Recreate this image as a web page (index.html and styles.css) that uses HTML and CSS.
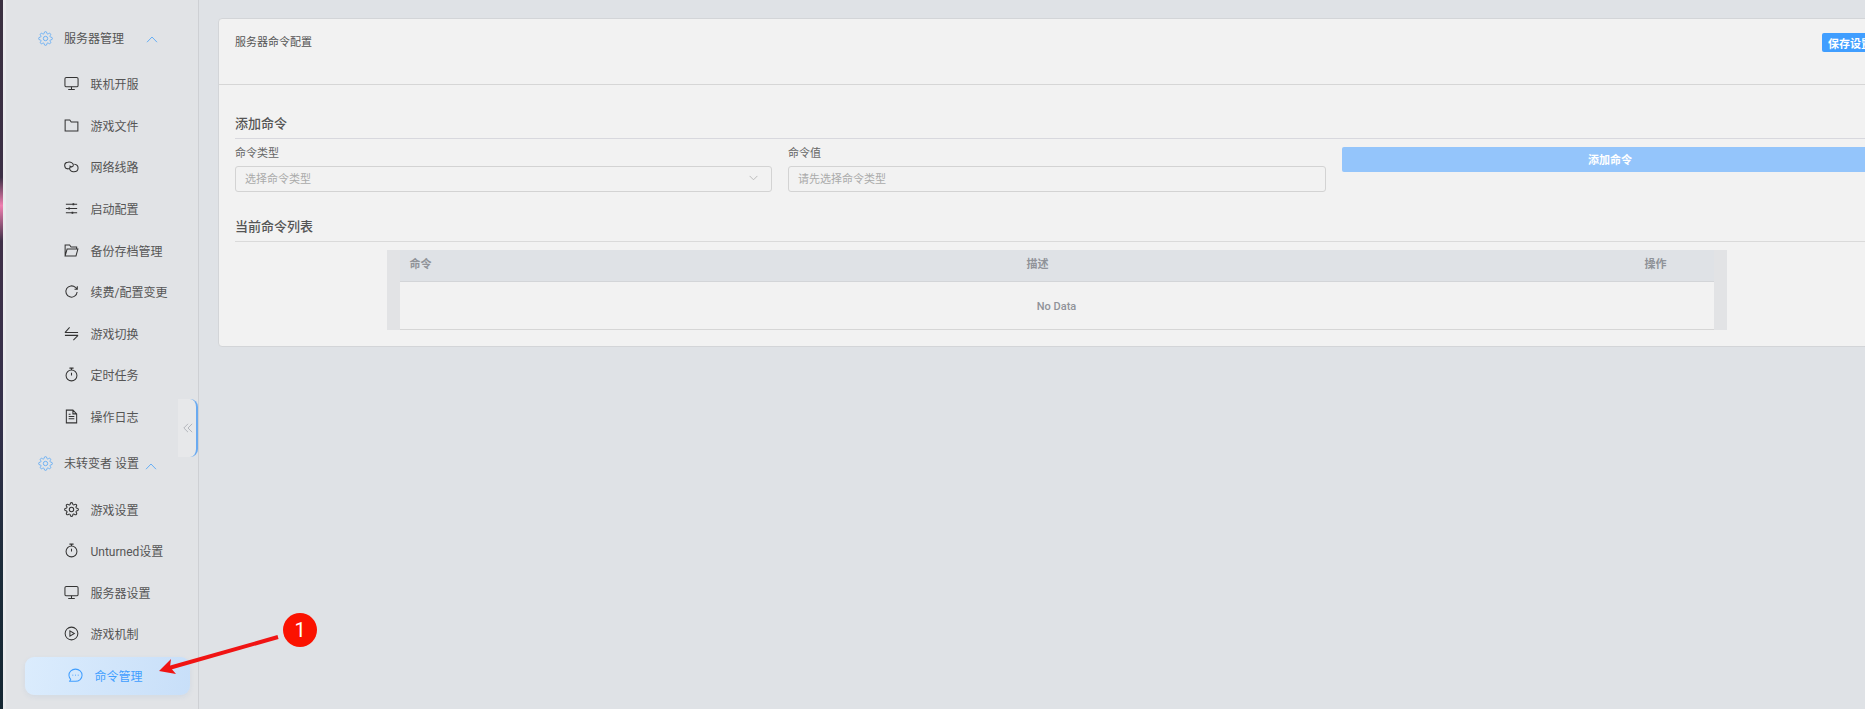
FILE: index.html
```html
<!DOCTYPE html>
<html lang="zh-CN">
<head>
    <meta charset="UTF-8">
    <title>服务器命令配置</title>
    <link rel="stylesheet" href="styles.css">
</head>
<body>
    <svg class="defs" width="0" height="0">
        <symbol id="gear" viewBox="0 0 24 24">
            <circle cx="12" cy="12" r="3.5"/>
            <path d="M19.4 15a1.65 1.65 0 0 0 .33 1.82l.06.06a2 2 0 0 1 0 2.83 2 2 0 0 1-2.83 0l-.06-.06a1.65 1.65 0 0 0-1.82-.33 1.65 1.65 0 0 0-1 1.51V21a2 2 0 0 1-2 2 2 2 0 0 1-2-2v-.09A1.65 1.65 0 0 0 9 19.4a1.65 1.65 0 0 0-1.82.33l-.06.06a2 2 0 0 1-2.83 0 2 2 0 0 1 0-2.83l.06-.06a1.65 1.65 0 0 0 .33-1.82 1.65 1.65 0 0 0-1.51-1H3a2 2 0 0 1-2-2 2 2 0 0 1 2-2h.09A1.65 1.65 0 0 0 4.6 9a1.65 1.65 0 0 0-.33-1.82l-.06-.06a2 2 0 0 1 0-2.83 2 2 0 0 1 2.83 0l.06.06a1.65 1.65 0 0 0 1.82.33H9a1.65 1.65 0 0 0 1-1.51V3a2 2 0 0 1 2-2 2 2 0 0 1 2 2v.09a1.65 1.65 0 0 0 1 1.51 1.65 1.65 0 0 0 1.82-.33l.06-.06a2 2 0 0 1 2.83 0 2 2 0 0 1 0 2.83l-.06.06a1.65 1.65 0 0 0-.33 1.82V9a1.65 1.65 0 0 0 1.51 1H21a2 2 0 0 1 2 2 2 2 0 0 1-2 2h-.09a1.65 1.65 0 0 0-1.51 1z"/>
        </symbol>
        <symbol id="monitor" viewBox="0 0 16 16">
            <rect x="1" y="1.5" width="14" height="10" rx="1.5"/>
            <path d="M8 11.5v3M4.5 14.5h7"/>
        </symbol>
        <symbol id="timer" viewBox="0 0 16 16">
            <circle cx="8" cy="9" r="5.8"/>
            <path d="M5.8 1.2h4.4M8 1.2v2M8 9V6"/>
        </symbol>
    </svg>
    <div class="app">
        <div class="backdrop"></div>
        <aside class="sidebar">
            <div class="group-title">
                <svg class="group-icon"><use href="#gear"/></svg>
                <span>服务器管理</span>
                <svg class="chevron" viewBox="0 0 12 7"><path d="M1 6.2 6 1l5 5.200"/></svg>
            </div>
            <div class="nav-item">
                <svg class="nav-icon"><use href="#monitor"/></svg>
                <span>联机开服</span>
            </div>
            <div class="nav-item">
                <svg class="nav-icon" viewBox="0 0 16 16"><path d="M1.2 2.2h5l1.500 2h7.100v9.600H1.200z"/></svg>
                <span>游戏文件</span>
            </div>
            <div class="nav-item">
                <svg class="nav-icon" viewBox="0 0 16 16"><path d="M6 10.500H4.500a3.500 3.500 0 0 1-.5-7c3-.8 6 .7 6 3 0 1.300-1 2-2 2s-1.800-.6-1.800-1.500"/><path d="M11 5.500c2 .2 4 1.700 4 4s-2 4-4.500 4c-2.500.2-4.500-1.300-4.500-3.300 0-1.300 1-2.200 2.200-2.200"/></svg>
                <span>网络线路</span>
            </div>
            <div class="nav-item">
                <svg class="nav-icon" viewBox="0 0 16 16"><path d="M2 3.500h12M2 8h12M2 12.500h12"/><path class="thick" d="M10 2.500v2M5.500 7v2M9 11.500v2"/></svg>
                <span>启动配置</span>
            </div>
            <div class="nav-item">
                <svg class="nav-icon" viewBox="0 0 16 16"><path d="M1.200 13.800V2.200h4.800l1.500 2h6v2.300M1.200 13.800h11.600l2-7.300H3.300z"/></svg>
                <span>备份存档管理</span>
            </div>
            <div class="nav-item">
                <svg class="nav-icon" viewBox="0 0 16 16"><path d="M14 8.500A6 6 0 1 1 12.200 3.700L14 5.300M14.200 2.300v3.200h-3"/></svg>
                <span>续费/配置变更</span>
            </div>
            <div class="nav-item">
                <svg class="nav-icon" viewBox="0 0 16 16"><path d="M1 7h14M6 1.500 1 7M1 10h14M10 15l5-5"/></svg>
                <span>游戏切换</span>
            </div>
            <div class="nav-item">
                <svg class="nav-icon"><use href="#timer"/></svg>
                <span>定时任务</span>
            </div>
            <div class="nav-item">
                <svg class="nav-icon" viewBox="0 0 16 16"><path d="M2.500 1.200h7l4 4v9.600h-11zM9.500 1.200v4h4M5 8h6M5 10.500h6M5 5.500h2"/></svg>
                <span>操作日志</span>
            </div>
            <div class="group-title group-second">
                <svg class="group-icon"><use href="#gear"/></svg>
                <span>未转变者 设置</span>
                <svg class="chevron chevron-near" viewBox="0 0 12 7"><path d="M1 6.200 6 1l5 5.200"/></svg>
            </div>
            <div class="nav-item">
                <svg class="nav-icon gear-dark"><use href="#gear"/></svg>
                <span>游戏设置</span>
            </div>
            <div class="nav-item">
                <svg class="nav-icon"><use href="#timer"/></svg>
                <span>Unturned设置</span>
            </div>
            <div class="nav-item">
                <svg class="nav-icon"><use href="#monitor"/></svg>
                <span>服务器设置</span>
            </div>
            <div class="nav-item">
                <svg class="nav-icon" viewBox="0 0 16 16"><circle cx="8" cy="8" r="6.800"/><path d="M6.300 5.200v5.600L11 8z"/></svg>
                <span>游戏机制</span>
            </div>
            <div class="nav-item active">
                <svg class="nav-icon" viewBox="0 0 16 16"><path d="M8 1.200c3.900 0 7 2.900 7 6.500s-3.100 6.500-7 6.500H1.800l1.100-2.200A6.300 6.300 0 0 1 1 7.700c0-3.600 3.100-6.500 7-6.500z"/><path class="thick" d="M4.900 7.700h.6M7.700 7.700h.6M10.500 7.700h.6"/></svg>
                <span>命令管理</span>
            </div>
        </aside>
        <div class="collapse-handle">
            <svg viewBox="0 0 12 12"><path d="M6 1 1 6l5 5M11 1 6 6l5 5"/></svg>
        </div>
        <main class="main">
            <section class="card">
                <div class="card-header">
                    <span>服务器命令配置</span>
                    <button class="btn btn-save">保存设置</button>
                </div>
                <div class="card-body">
                    <h3 class="section-title">添加命令</h3>
                    <div class="form-row">
                        <div class="field">
                            <label>命令类型</label>
                            <div class="input">
                                <span>选择命令类型</span>
                                <svg viewBox="0 0 10 6"><path d="M.7.7 5 5 9.300.7"/></svg>
                            </div>
                        </div>
                        <div class="field">
                            <label>命令值</label>
                            <div class="input"><span>请先选择命令类型</span></div>
                        </div>
                        <button class="btn btn-add">添加命令</button>
                    </div>
                    <h3 class="section-title section-list">当前命令列表</h3>
                    <div class="table-wrap">
                        <div class="table">
                            <div class="table-head">
                                <div>命令</div>
                                <div>描述</div>
                                <div>操作</div>
                            </div>
                            <div class="table-empty">No Data</div>
                        </div>
                    </div>
                </div>
            </section>
        </main>
        <svg class="callout" viewBox="0 0 120 56">
            <path d="M119 17 10 48" stroke="#f01414" stroke-width="4" fill="none"/>
            <path d="M0 51 12 39 11 47 17 54z" fill="#f01414"/>
        </svg>
        <div class="badge">1</div>
    </div>
</body>
</html>
```
FILE: styles.css
```css
* {
    box-sizing: border-box;
}
html, body {
    margin: 0;
    height: 100%;
    overflow: hidden;
}
body {
    font-family: 'Roboto', 'Noto Sans CJK SC', sans-serif;
    background: #dfe2e6;
    color: #555;
}
.defs {
    position: absolute;
}
.app {
    position: relative;
    display: flex;
    width: 1865px;
    height: 709px;
    overflow: hidden;
}
.backdrop {
    width: 3px;
    flex-shrink: 0;
    background: linear-gradient(180deg, #3a3040 0%, #3b2f45 25%, #f07fb0 29%, #3f3048 34%, #33304a 60%, #1c2c3a 80%, #142632 100%);
}
.sidebar {
    width: 196px;
    flex-shrink: 0;
    padding-top: 13px;
    background: #e1e3e6;
    border-left: 3px solid #e9eaec;
    border-right: 1px solid #ced0d4;
    font-size: 12px;
}
.group-title {
    display: flex;
    align-items: center;
    height: 50px;
    padding-left: 32px;
    color: #555;
}
.group-title span {
    margin-top: -2px;
}
.group-second {
    height: 49px;
    margin-top: 2px;
}
.group-icon {
    width: 15px;
    height: 15px;
    margin-right: 11px;
    fill: none;
    stroke: #66aef5;
    stroke-width: 1.5;
}
.chevron {
    width: 12px;
    height: 7px;
    margin: 3px 0 0 22px;
    fill: none;
    stroke: #66aef5;
    stroke-width: 1;
}
.chevron-near {
    margin: 5px 0 0 6px;
}
.nav-item {
    display: flex;
    align-items: center;
    height: 41.6px;
    padding-left: 58px;
    color: #555;
}
.nav-icon {
    width: 15px;
    height: 15px;
    margin-right: 11.5px;
    fill: none;
    stroke: #333;
    stroke-width: 1.1;
}
.gear-dark {
    stroke-width: 1.7;
}
.nav-icon .thick {
    stroke-width: 1.8;
}
.nav-item.active {
    width: 165px;
    height: 38px;
    margin: 2px 0 0 19px;
    padding-left: 43px;
    border-radius: 9px;
    background: linear-gradient(100deg, #dbecfd, #c8dff9);
    box-shadow: 0 2px 5px rgba(90, 140, 200, 0.1);
    color: #409eff;
}
.nav-item.active .nav-icon {
    stroke: #409eff;
}
.collapse-handle {
    position: absolute;
    left: 178px;
    top: 399px;
    width: 20px;
    height: 58px;
    display: flex;
    align-items: center;
    padding-left: 5px;
    background: #e7e8ea;
    border-right: 2px solid #6aaaf0;
    border-radius: 0 8px 8px 0;
}
.collapse-handle svg {
    width: 10px;
    height: 10px;
    fill: none;
    stroke: #a9adb3;
    stroke-width: 1;
}
.main {
    flex: 1;
    min-width: 0;
    padding: 18px 0 0 19px;
}
.card {
    width: 1677px;
    height: 329px;
    background: #f2f2f2;
    border: 1px solid #d3d5d8;
    border-radius: 4px;
    font-size: 11px;
}
.card-header {
    display: flex;
    justify-content: space-between;
    align-items: flex-start;
    height: 66px;
    padding: 14px 16px 0;
    border-bottom: 1px solid #d6d6d6;
    color: #555;
}
.card-header span {
    margin-top: 2px;
    line-height: 16px;
}
.btn {
    border: none;
    border-radius: 2px;
    color: #fff;
    font-family: inherit;
    font-size: 11px;
    font-weight: 700;
}
.btn-save {
    width: 56px;
    height: 19px;
    padding: 0;
    background: #409eff;
}
.card-body {
    padding: 0 16px;
}
.section-title {
    margin: 0;
    height: 54px;
    padding-top: 29px;
    border-bottom: 1px solid #d8d8de;
    font-size: 13px;
    font-weight: 500;
    line-height: 19px;
    color: #555;
}
.section-list {
    height: 37px;
    padding-top: 12px;
    border-bottom-color: #dadada;
}
.form-row {
    display: grid;
    grid-template-columns: 537px 538px 1fr;
    gap: 16px;
    height: 66px;
}
.field label {
    display: block;
    height: 27px;
    padding-top: 7px;
    line-height: 16px;
    color: #666;
}
.input {
    display: flex;
    justify-content: space-between;
    align-items: center;
    height: 26px;
    padding: 0 9px 2px;
    border: 1px solid #d3d3d3;
    border-radius: 3px;
    color: #aaa;
}
.input svg {
    width: 9px;
    height: 6px;
    margin-right: 4px;
    fill: none;
    stroke: #b5b5b5;
    stroke-width: 1;
}
.btn-add {
    height: 25px;
    margin-top: 8px;
    padding-bottom: 2px;
    background: #94c5fb;
}
.table-wrap {
    width: 1340px;
    margin: 8px auto 0;
    padding: 0 13px;
    background: #e2e3e5;
}
.table-head {
    display: grid;
    grid-template-columns: 1fr 1fr 80px;
    height: 32px;
    background: #dfe2e6;
    border-bottom: 1px solid #d3d5d8;
    color: #909399;
    font-weight: 700;
    line-height: 30px;
}
.table-head div {
    padding-left: 10px;
}
.table-head div:last-child {
    padding-left: 11px;
}
.table-empty {
    height: 48px;
    background: #f2f2f2;
    border-bottom: 1px solid #d6d6d6;
    color: #909399;
    font-weight: 500;
    line-height: 49px;
    text-align: center;
}
.callout {
    position: absolute;
    left: 159px;
    top: 620px;
    width: 120px;
    height: 56px;
}
.badge {
    position: absolute;
    left: 283px;
    top: 613px;
    width: 34px;
    height: 34px;
    border-radius: 50%;
    background: #fb1200;
    color: #fff;
    font-size: 20px;
    line-height: 34px;
    text-align: center;
}
```
